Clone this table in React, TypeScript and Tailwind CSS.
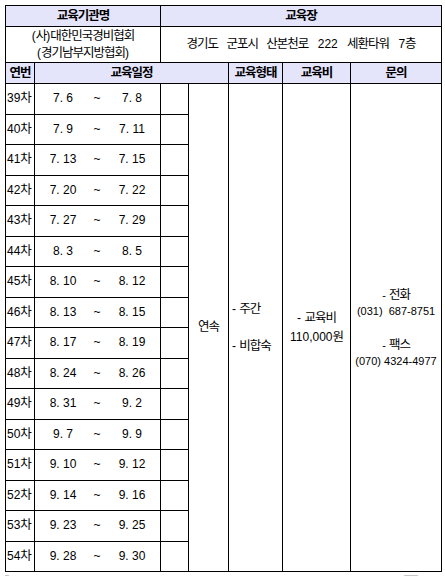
const rows = [
  ["39", "7. 6", "7. 8"],
  ["40", "7. 9", "7. 11"],
  ["41", "7. 13", "7. 15"],
  ["42", "7. 20", "7. 22"],
  ["43", "7. 27", "7. 29"],
  ["44", "8. 3", "8. 5"],
  ["45", "8. 10", "8. 12"],
  ["46", "8. 13", "8. 15"],
  ["47", "8. 17", "8. 19"],
  ["48", "8. 24", "8. 26"],
  ["49", "8. 31", "9. 2"],
  ["50", "9. 7", "9. 9"],
  ["51", "9. 10", "9. 12"],
  ["52", "9. 14", "9. 16"],
  ["53", "9. 23", "9. 25"],
  ["54", "9. 28", "9. 30"],
];

const cell = "border border-black p-0 align-middle";
const head = "border border-black p-0 align-middle bg-[#e4e4fb] font-bold text-center";

// Korean runs: bigger glyphs, tighter advance (like the original Malgun text)
function K({ children }: { children: React.ReactNode }) {
  return <span className="text-[12.5px] tracking-[-1px]">{children}</span>;
}

export default function App() {
  return (
    <div className="bg-white w-[445px] h-[577px] overflow-hidden pt-[5px] pl-[5px] text-[12px] leading-[17px] text-black font-['Liberation_Sans','Noto_Sans_CJK_KR',sans-serif]">
      <table className="border-collapse table-fixed w-[436px]">
        <colgroup>
          <col className="w-[29px]" />
          <col className="w-[126px]" />
          <col className="w-[28px]" />
          <col className="w-[40px]" />
          <col className="w-[54px]" />
          <col className="w-[68px]" />
          <col className="w-[91px]" />
        </colgroup>
        <tbody>
          <tr className="h-[21px]">
            <td colSpan={2} className={head}><K>교육기관명</K></td>
            <td colSpan={5} className={head}><K>교육장</K></td>
          </tr>
          <tr className="h-[36px]">
            <td colSpan={2} className={`${cell} text-center`}>
              (<K>사</K>)<K>대한민국경비협회</K>
              <br />
              (<K>경기남부지방협회</K>)
            </td>
            <td colSpan={5} className={`${cell} text-center [word-spacing:6px]`}>
              <K>경기도 군포시 산본천로</K> 222 <K>세환타워</K> 7<K>층</K>
            </td>
          </tr>
          <tr className="h-[21px]">
            <td className={head}><K>연번</K></td>
            <td colSpan={3} className={head}><K>교육일정</K></td>
            <td className={head}><K>교육형태</K></td>
            <td className={head}><K>교육비</K></td>
            <td className={head}><K>문의</K></td>
          </tr>
          {rows.map(([no, from, to], i) => (
            <tr key={no} className="h-[30.5px]">
              <td className={`${cell} pl-[1px] whitespace-nowrap`}>
                {no}
                <K>차</K>
              </td>
              <td className={cell}>
                <div className="grid grid-cols-[56px_12px_58px] text-center">
                  <span>{from}</span>
                  <span>~</span>
                  <span>{to}</span>
                </div>
              </td>
              <td className={cell}></td>
              {i === 0 && (
                <>
                  <td rowSpan={16} className={`${cell} text-center`}>
                    <K>연속</K>
                  </td>
                  <td rowSpan={16} className={`${cell} pl-[3px] leading-[18.5px]`}>
                    - <K>주간</K>
                    <br />
                    <br />
                    - <K>비합숙</K>
                  </td>
                  <td rowSpan={16} className={`${cell} text-center leading-[19px]`}>
                    - <K>교육비</K>
                    <br />
                    110,000<K>원</K>
                  </td>
                  <td rowSpan={16} className={`${cell} text-center text-[11px] leading-[16px] whitespace-nowrap`}>
                    <div>
                      - <K>전화</K>
                    </div>
                    <div>(031) &nbsp;687-8751</div>
                    <div className="mt-[18px]">
                      - <K>팩스</K>
                    </div>
                    <div>(070) 4324-4977</div>
                  </td>
                </>
              )}
            </tr>
          ))}
        </tbody>
      </table>
      <div className="flex mt-[3px] h-[3px]">
        <div className="w-[4px] border-t border-[#c8c8c8]" />
        <div className="ml-[395px] w-[14px] border-t border-[#c8c8c8]" />
      </div>
    </div>
  );
}
